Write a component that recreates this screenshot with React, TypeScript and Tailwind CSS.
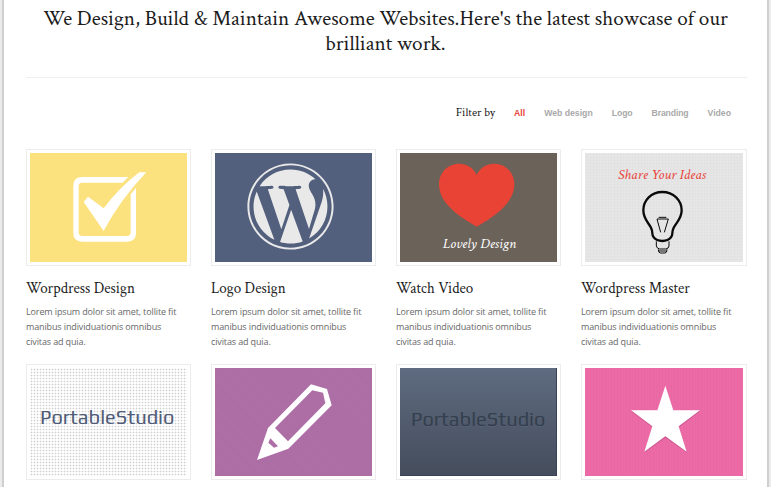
import type { ReactNode } from "react";
import { FaWordpress } from "react-icons/fa";

const SERIF = "font-['Crimson_Text','Liberation_Serif',serif]";
const LOGO = "font-['Play','Open_Sans',sans-serif]";

const LOREM = ["Lorem ipsum dolor sit amet, tollite fit", "manibus individuationis omnibus", "civitas ad quia."];

function Frame({ children, art }: { children?: ReactNode; art: string }) {
  return (
    <div className="border border-[#ececec] bg-white p-[3px]">
      <div className={`relative overflow-hidden ${art}`}>{children}</div>
    </div>
  );
}

function CheckArt() {
  return (
    <svg viewBox="30 24 471 327" className="block h-full w-full" preserveAspectRatio="none" fill="#fff">
      <path d="M325 96H186Q160 96 160 122V264Q160 290 186 290H322Q348 290 348 264V128L332 148V262Q332 273 321 273H187Q176 273 176 262V124Q176 113 187 113H308Z" />
      <path d="M204 155L191 171L251 258Q300 165 379 82H358Q300 125 251 190Z" />
    </svg>
  );
}

function HeartArt() {
  return (
    <svg viewBox="30 24 471 327" className="absolute inset-0 h-full w-full" preserveAspectRatio="none">
      <path
        fill="#e84335"
        d="M260 90C250 66 228 56 208 56C172 56 147 84 147 118C147 166 188 204 260 245C332 204 373 166 373 118C373 84 348 56 312 56C292 56 270 66 260 90Z"
      />
    </svg>
  );
}

function BulbArt() {
  return (
    <svg viewBox="30 24 474 327" className="absolute inset-0 h-full w-full" preserveAspectRatio="none" fill="none" stroke="#0a0a0a">
      <path
        strokeWidth="7"
        d="M262 141C229 141 205 165 205 196C205 222 220 232 228 248C235 262 229 269 236 277C243 286 252 288 262 288C272 288 281 286 288 277C295 269 289 262 296 248C304 232 320 222 320 196C320 165 295 141 262 141Z"
      />
      <path strokeWidth="3" d="M244 289V303Q246 311 254 312H272Q281 311 282 303V289M250 313Q250 324 256 324H270Q276 324 276 313M252 318H274" />
      <path strokeWidth="3" d="M257 262L246 222H280L268 262M251 217H274" />
    </svg>
  );
}

function PencilArt() {
  return (
    <svg viewBox="30 33 471 324" className="block h-full w-full" preserveAspectRatio="none">
      <path
        fill="#fff"
        fillRule="evenodd"
        d="M318 82L366 96L380 145L250 275L156 309L189 213ZM322 100L210 213L249 253L361 139L354 107ZM196 244L190 257L207 272L219 268Z"
      />
    </svg>
  );
}

function StarArt() {
  return (
    <svg viewBox="30 33 474 324" className="block h-full w-full" preserveAspectRatio="none">
      <path fill="#a83b73" opacity=".45" d="M271 90L295 163H375L312 211L336 287L271 242L208 287L232 211L168 163H247Z" />
      <path fill="#fff" d="M271 86L295 160H375L311 208L335 284L271 238L208 284L232 208L168 160H247Z" />
    </svg>
  );
}

function Card({ title, children }: { title: string; children: ReactNode }) {
  return (
    <article className="h-[215px]">
      {children}
      <h2 className={`${SERIF} mt-[13px] h-5 text-[15px] leading-5 whitespace-nowrap text-[#222]`}>{title}</h2>
      <p className="mt-[5px] font-['Open_Sans',sans-serif] text-[9px] leading-[15px] tracking-[-0.13px] whitespace-nowrap text-[#686868]">
        {LOREM.map((line) => (
          <span key={line} className="block">
            {line}
          </span>
        ))}
      </p>
    </article>
  );
}

export default function App() {
  return (
    <div className="flex h-[487px] w-[771px] overflow-hidden bg-[#ebebeb]">
      <main className="ml-[2px] flex w-[767px] flex-col border-x-2 border-x-[#cfcfcf] bg-white pr-[20px] pl-[22px]">
        <h1 className={`${SERIF} h-[77px] pt-[6px] pr-[17px] pl-[15px] text-center text-[21.2px] leading-[25px] text-[#1c1c1c]`}>
          We Design, Build &amp; Maintain Awesome Websites.Here's the latest showcase of our brilliant work.
        </h1>
        <hr className="border-t border-[#efefef]" />
        <nav className="mt-[25px] flex h-[20px] items-center justify-end gap-[19px] pr-[16px] font-['Liberation_Sans',Arial,sans-serif] text-[8.7px] font-bold text-[#a9a9a9]">
          <span className={`${SERIF} text-[12px] font-normal text-[#222]`}>Filter by</span>
          <a className="pt-px text-[#e8453c]">All</a>
          <a className="pt-px">Web design</a>
          <a className="pt-px tracking-[-0.1px]">Logo</a>
          <a className="pt-px tracking-[-0.15px]">Branding</a>
          <a className="pt-px">Video</a>
        </nav>
        <section className="mt-[26px] grid w-[721px] grid-cols-[165px_165px_165px_166px] gap-x-5">
          <Card title="Worpdress Design">
            <Frame art="h-[109px] bg-[#fce27e]">
              <CheckArt />
            </Frame>
          </Card>
          <Card title="Logo Design">
            <Frame art="h-[109px] bg-[#525f7d]">
              <FaWordpress className="mt-[9px] ml-[31px] h-[89px] w-[89px] text-[#e9e9e9]" />
            </Frame>
          </Card>
          <Card title="Watch Video">
            <Frame art="h-[109px] bg-[#6b635a]">
              <HeartArt />
              <span className={`${SERIF} absolute top-[81px] left-[43px] text-[14.7px] leading-5 whitespace-nowrap text-white italic`}>Lovely Design</span>
            </Frame>
          </Card>
          <Card title="Wordpress Master">
            <Frame art="h-[109px] bg-[#e6e6e6] bg-[repeating-linear-gradient(90deg,#0000_0_2px,#00000003_2px_3px),repeating-linear-gradient(0deg,#0000_0_2px,#00000003_2px_3px)]">
              <BulbArt />
              <span className={`${SERIF} absolute top-[12px] left-[33px] text-[14.7px] leading-5 whitespace-nowrap text-[#e8453c] italic`}>Share Your Ideas</span>
            </Frame>
          </Card>
          <Frame art="h-[108px] bg-[radial-gradient(circle,#cfcfcf_0.5px,#fff_1.2px)] bg-[size:3px_3px]">
            <span className={`${LOGO} absolute top-[37px] left-[10px] text-[20px] leading-6 text-[#4f5c78]`}>PortableStudio</span>
          </Frame>
          <Frame art="h-[108px] bg-[#ae6fa7] bg-[repeating-linear-gradient(45deg,#0000_0_1px,#00000005_1px_2px)]">
            <PencilArt />
          </Frame>
          <Frame art="h-[108px] bg-linear-to-b from-[#5e6b80] to-[#454d5c] shadow-[inset_-1px_-1px_0_#394257]">
            <span className={`${LOGO} absolute top-[39px] left-[11px] text-[20px] leading-6 text-[#343f4d] [text-shadow:0_1px_0_#64708055]`}>PortableStudio</span>
          </Frame>
          <Frame art="h-[108px] bg-[#ec6aa6] bg-[repeating-linear-gradient(90deg,#0000_0_2px,#00000005_2px_3px)]">
            <StarArt />
          </Frame>
        </section>
      </main>
    </div>
  );
}
